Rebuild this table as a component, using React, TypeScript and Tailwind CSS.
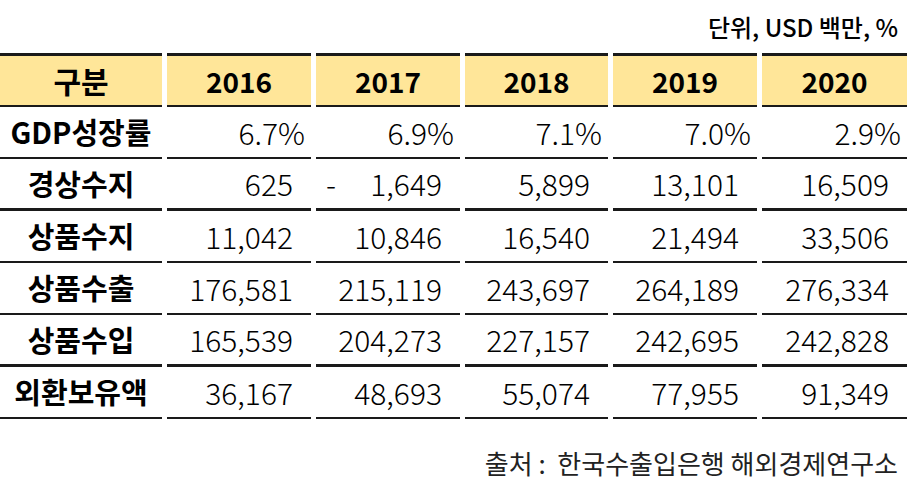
import React from "react";

const years = ["2016", "2017", "2018", "2019", "2020"];

interface Row {
    label: string;
    values: string[];
    percent?: boolean;
    thick?: boolean;
}

const rows: Row[] = [
    { label: "GDP성장률", values: ["6.7%", "6.9%", "7.1%", "7.0%", "2.9%"], percent: true },
    { label: "경상수지", values: ["625", "-1,649", "5,899", "13,101", "16,509"], thick: true },
    { label: "상품수지", values: ["11,042", "10,846", "16,540", "21,494", "33,506"] },
    { label: "상품수출", values: ["176,581", "215,119", "243,697", "264,189", "276,334"] },
    { label: "상품수입", values: ["165,539", "204,273", "227,157", "242,695", "242,828"], thick: true },
    { label: "외환보유액", values: ["36,167", "48,693", "55,074", "77,955", "91,349"] },
];

const font = { fontFamily: '"Noto Sans CJK KR", "Noto Sans", sans-serif' };

function NumberCell({ value, percent, thick }: { value: string; percent?: boolean; thick?: boolean }) {
    const negative = value.startsWith("-");
    const text = negative ? value.slice(1) : value;
    return (
        <div
            className={
                "flex items-center h-[52px] border-b-[#1a1a1a] text-[30px] font-light text-black " +
                (thick ? "border-b-[3px] " : "border-b-2 ") +
                (percent ? "pr-[6px] " : "pr-[18px] ") +
                (negative ? "justify-between pl-[10px]" : "justify-end")
            }
        >
            {negative && <span>-</span>}
            <span>{text}</span>
        </div>
    );
}

export default function App() {
    return (
        <div className="w-[907px] h-[494px] bg-white" style={font}>
            <div className="flex justify-end pr-[9px] pt-[9px] h-[53px] text-[24px] font-medium text-black leading-[36px]">
                단위, USD 백만, %
            </div>

            <div className="grid grid-cols-[162px_144px_144px_143px_144px_145px] gap-x-[5px]">
                <div className="flex items-center justify-center h-[54px] bg-[#ffe699] border-t-[3px] border-b-2 border-[#1a1a1a] text-[30px] font-bold">
                    구분
                </div>
                {years.map((y) => (
                    <div
                        key={y}
                        className="flex items-center justify-center h-[54px] bg-[#ffe699] border-t-[3px] border-b-2 border-[#1a1a1a] text-[28px] font-bold"
                    >
                        {y}
                    </div>
                ))}

                {rows.map((row) => (
                    <React.Fragment key={row.label}>
                        <div
                            className={
                                "flex items-center justify-center h-[52px] border-b-[#1a1a1a] text-[29px] font-bold text-black " +
                                (row.thick ? "border-b-[3px]" : "border-b-2")
                            }
                        >
                            {row.label}
                        </div>
                        {row.values.map((v, i) => (
                            <NumberCell key={i} value={v} percent={row.percent} thick={row.thick} />
                        ))}
                    </React.Fragment>
                ))}
            </div>

            <div className="flex justify-end pr-[9px] pt-[27px] text-[26px] text-[#222] leading-[34px]">
                출처 :&nbsp;&nbsp;한국수출입은행 해외경제연구소
            </div>
        </div>
    );
}
